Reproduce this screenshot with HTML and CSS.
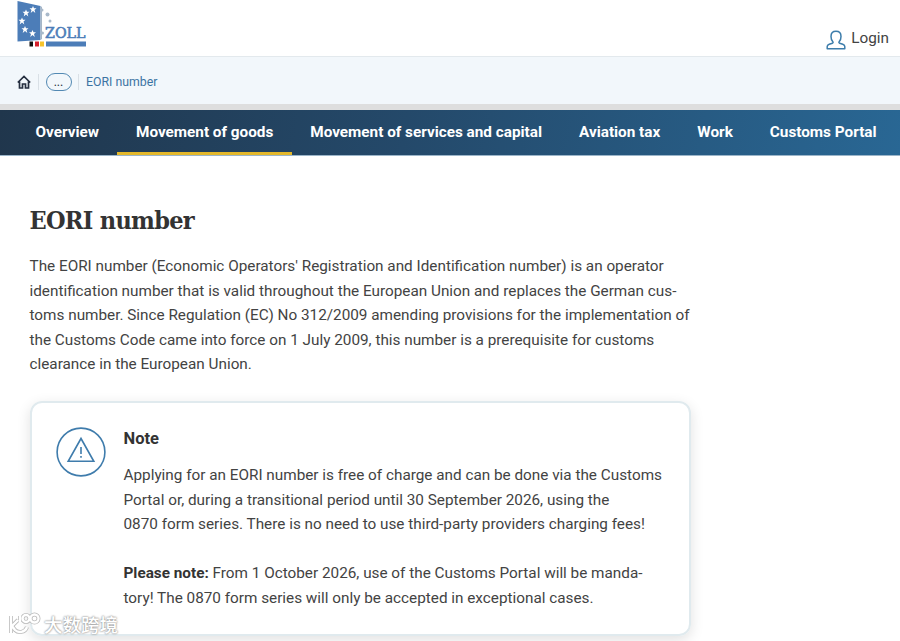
FILE: index.html
```html
<!DOCTYPE html>
<html lang="en">

<head>
    <meta charset="utf-8">
    <meta name="viewport" content="width=device-width, initial-scale=1.0">
    <title>EORI number</title>
    <link rel="stylesheet" href="styles.css">
</head>

<body>
    <header>
        <a class="logo" aria-label="Zoll">
            <svg width="72" height="50" viewBox="0 0 72 50">
                <path d="M1.500 1l23 5v34l-23 1.500z" fill="#4c7db8" />
                <path d="M24.500 6l1.500 1v32l-1.500 1z" fill="#a5b5c6" />
                <defs>
                    <path id="star" d="M0-3.600l1 2.400h2.500L1.500.5l.8 3.100L0 1.600l-2.300 2 .8-3.100-2-1.700H-1z" />
                </defs>
                <g fill="#fff">
                    <use href="#star" x="10" y="13" />
                    <use href="#star" x="17" y="9.500" />
                    <use href="#star" x="6" y="21" />
                    <use href="#star" x="9" y="29.500" />
                    <use href="#star" x="16.500" y="33.500" />
                </g>
                <g fill="#a9b9ca">
                    <circle cx="26" cy="10" r="1.500" />
                    <circle cx="31.500" cy="14.500" r="2" />
                    <circle cx="34" cy="21" r="1.500" />
                    <circle cx="26.500" cy="33" r="1.500" />
                </g>
                <text class="logo-text" x="29" y="37.500" textLength="40.500" lengthAdjust="spacingAndGlyphs">ZOLL</text>
                <path d="M13.500 41.500H17v5h-3.500z" fill="#111" />
                <path d="M19 41.500h4v5h-4z" fill="#d5202c" />
                <path d="M24 41.500h4v5h-4z" fill="#f6c32c" />
                <path d="M30 41.500h40v5H30z" fill="#4c7db8" />
            </svg>
        </a>
        <a class="login">
            <svg width="20" height="20" viewBox="0 0 20 20" fill="none" stroke="#3d7dab" stroke-width="1.500" stroke-linejoin="round">
                <path d="M1.200 18.800v-2.200c0-1.300.8-2 2-2.400l3.200-1c.9-.3.900-1 .3-1.700C5.500 10 5 8.400 5 6.400 5 3.200 6.800 1.200 10 1.200s5 2 5 5.200c0 2-.5 3.600-1.700 5.100-.6.700-.6 1.400.3 1.700l3.200 1c1.200.4 2 1.100 2 2.400v2.200z" />
            </svg>
            <span>Login</span>
        </a>
    </header>
    <div class="breadcrumb">
        <svg class="home" width="14" height="14" viewBox="0 0 14 14" fill="none" stroke="#262f40" stroke-width="1.700">
            <path d="M.8 7.500L7 1.500l6.200 6M2.500 6.500V13h3V9h3v4h3V6.500" />
        </svg>
        <span class="line"></span>
        <span class="more">...</span>
        <span class="line"></span>
        <a class="current">EORI number</a>
    </div>
    <nav>
        <a>Overview</a>
        <a class="active">Movement of goods</a>
        <a>Movement of services and capital</a>
        <a>Aviation tax</a>
        <a>Work</a>
        <a>Customs Portal</a>
    </nav>
    <main>
        <h1>EORI number</h1>
        <p>The EORI number (Economic Operators' Registration and Identification number) is an operator<br>
            identification number that is valid throughout the European Union and replaces the German cus-<br>
            toms number. Since Regulation (EC) No 312/2009 amending provisions for the implementation of<br>
            the Customs Code came into force on 1 July 2009, this number is a prerequisite for customs<br>
            clearance in the European Union.</p>
        <section class="note">
            <svg class="note-icon" width="50" height="50" viewBox="0 0 50 50" fill="none" stroke="#3f7cac" stroke-width="1.600">
                <circle cx="25" cy="25" r="23.900" />
                <path d="M25 11.500l12.800 22.800H12.200z" />
                <path d="M25 20v7M25 29v1.700" />
            </svg>
            <div class="note-text">
                <h2>Note</h2>
                <p>Applying for an EORI number is free of charge and can be done via the Customs<br>
                    Portal or, during a transitional period until 30 September 2026, using the<br>
                    0870 form series. There is no need to use third-party providers charging fees!</p>
                <p><strong>Please note:</strong> From 1 October 2026, use of the Customs Portal will be manda-<br>
                    tory! The 0870 form series will only be accepted in exceptional cases.</p>
            </div>
        </section>
    </main>
    <div class="watermark">
        <svg width="34" height="24" viewBox="0 0 34 24" fill="none">
            <g stroke="#bbb" stroke-width="4">
                <path d="M3 4v17M10 8l-6 6 3 4c3 3 10 3 12-3M12 4v6" />
                <circle cx="18" cy="6.500" r="3.500" />
                <circle cx="26.500" cy="6.500" r="4" />
            </g>
            <g stroke="#fff" stroke-width="2.400">
                <path d="M3 4v17M10 8l-6 6 3 4c3 3 10 3 12-3M12 4v6" />
                <circle cx="18" cy="6.500" r="3.500" />
                <circle cx="26.500" cy="6.500" r="4" />
            </g>
        </svg>
        <span>大数跨境</span>
    </div>
</body>

</html>
```
FILE: styles.css
```css
* {
    padding: 0;
    margin: 0;
    box-sizing: border-box;
}

body {
    height: 641px;
    overflow: hidden;
    background-color: #fff;
    color: #434343;
    font-family: Roboto, sans-serif;
    font-size: 15.3px;
    line-height: 24.5px;
}

header {
    display: flex;
    justify-content: space-between;
    height: 56px;
    padding: 0 11px 0 16px;
}

.logo-text {
    font-family: "DejaVu Serif", serif;
    font-size: 15px;
    fill: #4c7db8;
    stroke: #4c7db8;
    stroke-width: 0.6px;
}

.login {
    display: flex;
    gap: 5px;
    padding-top: 26px;
}

.login svg {
    margin-top: 4px;
}

.breadcrumb {
    display: flex;
    align-items: center;
    height: 54px;
    padding: 3px 17px 0;
    border-top: 1px solid #e3e9ed;
    border-bottom: 6px solid #dedede;
    background-color: #f2f7fb;
    font-size: 12.3px;
}

.line {
    width: 1px;
    height: 16px;
    margin: 0 7px 0 6.5px;
    background-color: #d9e0e6;
}

.more {
    width: 26px;
    height: 18px;
    border: 1px solid #5289b3;
    border-radius: 9px;
    color: #262f40;
    line-height: 16px;
    text-align: center;
}

.current {
    padding-top: 1px;
    color: #3c74a3;
}

nav {
    display: flex;
    height: 46px;
    padding-left: 17px;
    background: linear-gradient(100deg, #20364c, #24496a 45%, #296794);
    border-bottom: 1px solid #9bb5c9;
}

nav a {
    padding: 0 18.5px;
    color: #fff;
    font-size: 15.3px;
    font-weight: 700;
    line-height: 44px;
    white-space: nowrap;
}

nav .active {
    border-bottom: 3px solid #e4b82b;
}

main {
    padding: 47px 0 0 29.5px;
    white-space: nowrap;
}

h1 {
    margin-bottom: 15px;
    color: #333;
    font-family: "Roboto Slab", "DejaVu Serif Condensed", "DejaVu Serif", serif;
    font-size: 25px;
    font-stretch: condensed;
    font-weight: 700;
    letter-spacing: -0.7px;
    line-height: 36px;
}

.note {
    display: flex;
    gap: 18px;
    width: 661px;
    height: 235px;
    margin-top: 24px;
    padding: 24px 24px 0;
    border: 2px solid #e0eaee;
    border-radius: 12px;
    box-shadow: 0 4px 14px rgba(0, 0, 0, 0.12);
}

.note h2 {
    margin-bottom: 12px;
    color: #333;
    font-size: 16.5px;
    line-height: 24.5px;
}

.note p + p {
    margin-top: 24.5px;
}

strong {
    color: #333;
}

.watermark {
    position: absolute;
    left: 8px;
    bottom: 5px;
    display: flex;
    gap: 2px;
    color: #fff;
    font-family: "Noto Sans CJK SC", sans-serif;
    font-size: 18.5px;
    font-weight: 500;
    text-shadow: 0 0 2px #888, 0 0 2px #aaa;
}
```
